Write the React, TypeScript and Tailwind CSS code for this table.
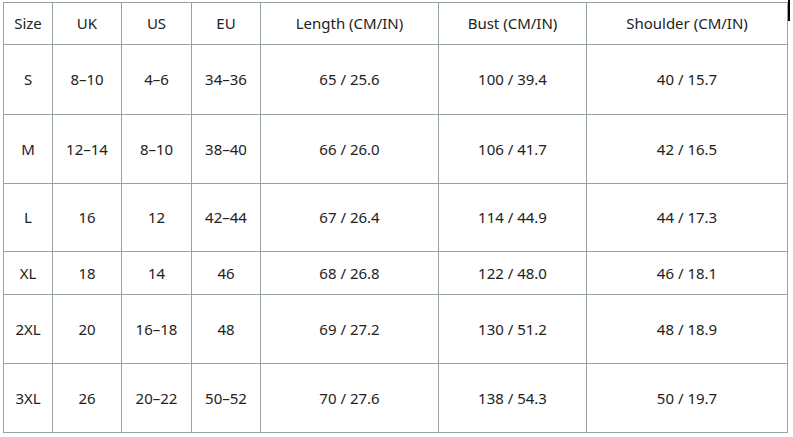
import React from 'react'

const headers = ['Size', 'UK', 'US', 'EU', 'Length (CM/IN)', 'Bust (CM/IN)', 'Shoulder (CM/IN)']

const colWidths = ['w-[49px]', 'w-[69px]', 'w-[70px]', 'w-[69px]', 'w-[178px]', 'w-[148px]', 'w-[201px]']

const rows = [
  { h: 'h-[70px]', cells: ['S', '8–10', '4–6', '34–36', '65 / 25.6', '100 / 39.4', '40 / 15.7'] },
  { h: 'h-[69px]', cells: ['M', '12–14', '8–10', '38–40', '66 / 26.0', '106 / 41.7', '42 / 16.5'] },
  { h: 'h-[68px]', cells: ['L', '16', '12', '42–44', '67 / 26.4', '114 / 44.9', '44 / 17.3'] },
  { h: 'h-[43px]', cells: ['XL', '18', '14', '46', '68 / 26.8', '122 / 48.0', '46 / 18.1'] },
  { h: 'h-[69px]', cells: ['2XL', '20', '16–18', '48', '69 / 27.2', '130 / 51.2', '48 / 18.9'] },
  { h: 'h-[69px]', cells: ['3XL', '26', '20–22', '50–52', '70 / 27.6', '138 / 54.3', '50 / 19.7'] },
]

export default function App() {
  return (
    <div className="relative w-[793px] h-[437px] bg-white pl-[3px] pt-[2px] font-['Noto_Sans','Open_Sans',sans-serif] text-[15px] text-[#222]">
      <table className="border-collapse table-fixed w-[785px]">
        <colgroup>
          {colWidths.map((w, i) => (
            <col key={i} className={w} />
          ))}
        </colgroup>
        <thead>
          <tr className="h-[42px]">
            {headers.map((t) => (
              <th key={t} className="border border-[#98a4a4] font-normal text-center align-middle p-0">
                {t}
              </th>
            ))}
          </tr>
        </thead>
        <tbody>
          {rows.map((r) => (
            <tr key={r.cells[0]} className={r.h}>
              {r.cells.map((c, i) => (
                <td key={i} className="border border-[#98a4a4] text-center align-middle p-0">
                  {c}
                </td>
              ))}
            </tr>
          ))}
        </tbody>
      </table>
      {/* stray caret line at the top right */}
      <div className="absolute right-[3px] top-0 w-[2px] h-[21px] bg-black" />
    </div>
  )
}
